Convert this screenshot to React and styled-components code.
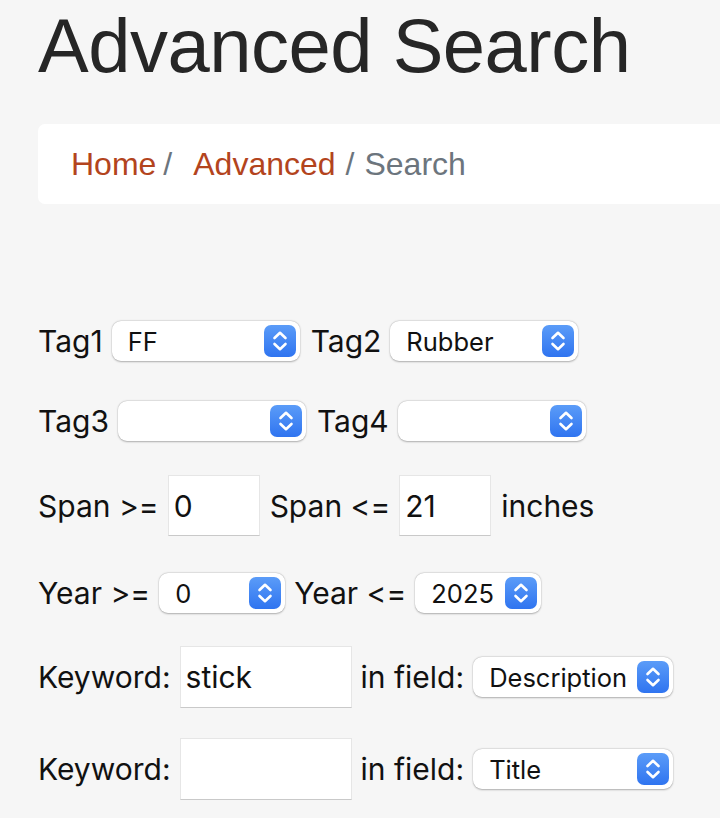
import React from 'react';
import styled, { createGlobalStyle } from 'styled-components';

const GlobalStyle = createGlobalStyle`
  html, body {
    margin: 0;
    padding: 0;
    background: #f6f6f6;
  }
  body {
    overflow: hidden;
    font-family: Inter, "Liberation Sans", sans-serif;
    color: #111;
  }
`;

const Page = styled.div`
  padding: 0 0 0 38px;
  overflow: hidden;
`;

const Title = styled.h1`
  margin: 0;
  padding-top: 1px;
  height: 123px;
  font-family: "Liberation Sans", Arial, sans-serif;
  font-weight: 400;
  font-size: 76px;
  line-height: 90px;
  letter-spacing: -0.5px;
  color: #262626;
`;

const Breadcrumb = styled.nav`
  display: flex;
  align-items: center;
  height: 80px;
  margin-right: -20px;
  padding: 0 0 0 33px;
  background: #fff;
  border-radius: 7px;
  font-family: "Liberation Sans", Arial, sans-serif;
  font-size: 32px;
  color: #6c757d;
`;

const Crumb = styled.a`
  color: #b3441d;
  text-decoration: none;
`;

const Sep = styled.span`
  margin: 0 ${p => p.$right}px 0 ${p => p.$left}px;
  color: #6c757d;
`;

const Form = styled.form`
  display: flex;
  flex-direction: column;
  padding-top: 117px;
`;

const Row = styled.div`
  display: flex;
  align-items: center;
  height: ${p => p.$h}px;
  margin-bottom: ${p => p.$mb}px;
  font-size: 30px;
`;

const Label = styled.label`
  margin-right: ${p => p.$mr ?? 9}px;
  margin-left: ${p => p.$ml ?? 0}px;
  white-space: nowrap;
`;

const SelectBox = styled.div`
  display: flex;
  align-items: center;
  width: ${p => p.$w}px;
  height: 40px;
  box-sizing: border-box;
  padding: 0 4px 0 16px;
  background: #fff;
  border-radius: 9px;
  box-shadow: 0 0.5px 2px rgba(0, 0, 0, 0.28), 0 0 0 0.5px rgba(0, 0, 0, 0.06);
`;

const SelectText = styled.span`
  flex: 1;
  font-size: 25.5px;
  color: #111;
  white-space: nowrap;
  overflow: hidden;
`;

const Stepper = styled.span`
  display: flex;
  align-items: center;
  justify-content: center;
  width: 32px;
  height: 32px;
  flex: none;
  border-radius: 7px;
  background: linear-gradient(#5b9cf8, #2f74f0);
`;

const TextInput = styled.div`
  display: flex;
  align-items: center;
  width: ${p => p.$w}px;
  height: ${p => p.$h}px;
  box-sizing: border-box;
  padding-left: 5px;
  background: #fff;
  border: 1px solid #e6e6e6;
  border-bottom: 1.5px solid #c9c9c9;
  font-size: 30px;
  color: #111;
`;

const Chevrons = () => (
  <svg width="18" height="22" viewBox="0 0 18 22" fill="none" stroke="#fff" strokeWidth="2.6" strokeLinecap="round" strokeLinejoin="round">
    <path d="M3.5 8 L9 2.8 L14.5 8" />
    <path d="M3.5 14 L9 19.2 L14.5 14" />
  </svg>
);

const Select = ({ w, value }) => (
  <SelectBox $w={w}>
    <SelectText>{value}</SelectText>
    <Stepper><Chevrons /></Stepper>
  </SelectBox>
);

export default function App() {
  return (
    <Page>
      <GlobalStyle />
      <Title>Advanced Search</Title>
      <Breadcrumb>
        <Crumb href="#">Home</Crumb>
        <Sep $left={7} $right={21}>/</Sep>
        <Crumb href="#">Advanced</Crumb>
        <Sep $left={10} $right={10}>/</Sep>
        <span>Search</span>
      </Breadcrumb>
      <Form>
        <Row $h={40} $mb={40}>
          <Label>Tag1</Label>
          <Select w={188} value="FF" />
          <Label $ml={11}>Tag2</Label>
          <Select w={188} value="Rubber" />
        </Row>
        <Row $h={40} $mb={34}>
          <Label>Tag3</Label>
          <Select w={188} value="" />
          <Label $ml={11}>Tag4</Label>
          <Select w={188} value="" />
        </Row>
        <Row $h={61} $mb={37}>
          <Label>Span &gt;=</Label>
          <TextInput $w={92} $h={61}>0</TextInput>
          <Label $ml={10}>Span &lt;=</Label>
          <TextInput $w={92} $h={61}>21</TextInput>
          <Label $ml={10}>inches</Label>
        </Row>
        <Row $h={40} $mb={33}>
          <Label>Year &gt;=</Label>
          <Select w={126} value="0" />
          <Label $ml={9}>Year &lt;=</Label>
          <Select w={126} value="2025" />
        </Row>
        <Row $h={62} $mb={30}>
          <Label>Keyword:</Label>
          <TextInput $w={172} $h={62}>stick</TextInput>
          <Label $ml={9}>in field:</Label>
          <Select w={200} value="Description" />
        </Row>
        <Row $h={62} $mb={0}>
          <Label>Keyword:</Label>
          <TextInput $w={172} $h={62}></TextInput>
          <Label $ml={9}>in field:</Label>
          <Select w={200} value="Title" />
        </Row>
      </Form>
    </Page>
  );
}
